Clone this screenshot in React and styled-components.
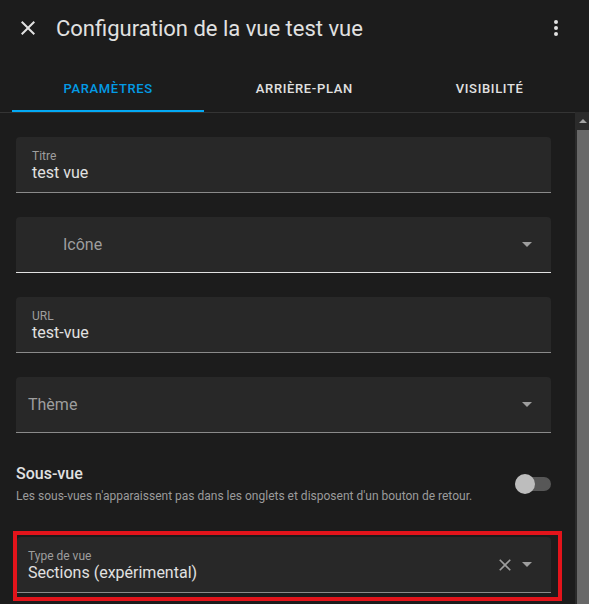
import React from "react";
import styled, { createGlobalStyle } from "styled-components";

const GlobalStyle = createGlobalStyle`
  html, body {
    margin: 0;
    padding: 0;
    background: #1c1c1c;
    overflow: hidden;
  }
  body {
    font-family: Roboto, "Noto Sans", "Liberation Sans", sans-serif;
    color: #e1e1e1;
  }
`;

// Dialog shell
const Dialog = styled.div`
  width: 589px;
  height: 604px;
  display: flex;
  flex-direction: column;
  background: #1c1c1c;
`;

const Header = styled.div`
  height: 56px;
  display: flex;
  align-items: center;
  padding: 0 21px 0 16px;
  gap: 16px;
`;

const Title = styled.h1`
  flex: 1;
  margin: 0;
  font-size: 22px;
  font-weight: 400;
  color: #e1e1e1;
  white-space: nowrap;
`;

const IconButton = styled.div`
  width: 24px;
  height: 24px;
  display: flex;
  align-items: center;
  justify-content: center;
  color: #e1e1e1;
`;

// Tabs
const TabBar = styled.div`
  margin-top: 8px;
  height: 48px;
  display: flex;
  padding: 0 14px 0 12px;
`;

const Tab = styled.div`
  flex: 1 1 auto;
  position: relative;
  display: flex;
  align-items: center;
  justify-content: center;
  font-size: 13px;
  font-weight: 500;
  letter-spacing: 0.65px;
  text-transform: uppercase;
  color: ${(p) => (p.$active ? "#039be5" : "#e1e1e1")};

  &::after {
    content: "";
    display: ${(p) => (p.$active ? "block" : "none")};
    position: absolute;
    left: 0;
    right: 0;
    bottom: 0;
    height: 2px;
    background: #03a9f4;
  }
`;

// Body with content and scrollbar
const Body = styled.div`
  flex: 1;
  min-height: 0;
  display: flex;
`;

const Content = styled.div`
  flex: 1;
  border-top: 1px solid #343434;
  padding: 24px 24px 0 16px;
  display: flex;
  flex-direction: column;
  gap: 24px;
  overflow: hidden;
`;

const Scrollbar = styled.div`
  width: 14px;
  display: flex;
  flex-direction: column;
  background: #2b2b2b;
`;

const ScrollArrow = styled.div`
  height: 18px;
  display: flex;
  align-items: center;
  justify-content: center;
  padding-left: 2px;
`;

const ScrollThumb = styled.div`
  flex: 1;
  margin-left: 2px;
  background: #686868;
`;

// Form fields
const Field = styled.div`
  box-sizing: border-box;
  height: 56px;
  flex-shrink: 0;
  display: flex;
  align-items: center;
  padding: 0 19px 0 ${(p) => p.$pad}px;
  background: #282828;
  border-radius: 4px 4px 0 0;
  border-bottom: 1px solid ${(p) => (p.$focused ? "#e1e1e1" : "#8a8a8a")};
`;

const FieldText = styled.div`
  flex: 1;
  display: flex;
  flex-direction: column;
`;

const FieldLabel = styled.span`
  font-size: 12px;
  line-height: 16px;
  color: #9e9e9e;
`;

const FieldValue = styled.span`
  font-size: 16px;
  line-height: 18px;
  color: #e1e1e1;
`;

const Placeholder = styled.span`
  font-size: 16px;
  color: #9e9e9e;
`;

const Trailing = styled.div`
  display: flex;
  align-items: center;
  gap: 7px;
  color: #9e9e9e;
`;

// Settings row with switch
const SettingsRow = styled.div`
  display: flex;
  align-items: center;
  margin: 5px 0 1px;
`;

const RowText = styled.div`
  flex: 1;
  display: flex;
  flex-direction: column;
`;

const RowTitle = styled.span`
  font-size: 16px;
  font-weight: 500;
  line-height: 24px;
  color: #e1e1e1;
`;

const RowDesc = styled.span`
  font-size: 12px;
  line-height: 20px;
  color: #9b9b9b;
  white-space: nowrap;
`;

const Switch = styled.div`
  position: relative;
  width: 36px;
  height: 14px;
  border-radius: 7px;
  background: #575757;
  margin-left: 12px;

  &::before {
    content: "";
    position: absolute;
    left: 0;
    top: -3px;
    width: 20px;
    height: 20px;
    border-radius: 50%;
    background: #bdbdbd;
  }
`;

const Highlight = styled.div`
  margin-left: -3px;
  width: 549px;
  box-sizing: border-box;
  border: 4px solid #e3141b;
  padding: 2px 7px 4px 0;
  flex-shrink: 0;
`;

const closePath =
  "M19,6.41L17.59,5L12,10.59L6.41,5L5,6.41L10.59,12L5,17.59L6.41,19L12,13.41L17.59,19L19,17.59L13.41,12L19,6.41Z";

const CloseIcon = ({ size = 24 }) => (
  <svg width={size} height={size} viewBox="0 0 24 24" fill="currentColor">
    <path d={closePath} />
  </svg>
);

const DotsIcon = () => (
  <svg width="24" height="24" viewBox="0 0 24 24" fill="currentColor">
    <path d="M12,16A2,2 0 0,1 14,18A2,2 0 0,1 12,20A2,2 0 0,1 10,18A2,2 0 0,1 12,16M12,10A2,2 0 0,1 14,12A2,2 0 0,1 12,14A2,2 0 0,1 10,12A2,2 0 0,1 12,10M12,4A2,2 0 0,1 14,6A2,2 0 0,1 12,8A2,2 0 0,1 10,6A2,2 0 0,1 12,4Z" />
  </svg>
);

const DropArrow = () => (
  <svg width="10" height="5" viewBox="0 0 10 5" fill="#9e9e9e">
    <polygon points="0,0 10,0 5,5" />
  </svg>
);

const tabs = ["Paramètres", "Arrière-plan", "Visibilité"];

const App = () => {
  return (
    <>
      <GlobalStyle />
      <Dialog>
        <Header>
          <IconButton>
            <CloseIcon />
          </IconButton>
          <Title>Configuration de la vue test vue</Title>
          <IconButton>
            <DotsIcon />
          </IconButton>
        </Header>

        <TabBar>
          {tabs.map((t, i) => (
            <Tab key={t} $active={i === 0}>
              {t}
            </Tab>
          ))}
        </TabBar>

        <Body>
          <Content>
            <Field $pad={16}>
              <FieldText>
                <FieldLabel>Titre</FieldLabel>
                <FieldValue>test vue</FieldValue>
              </FieldText>
            </Field>

            <Field $pad={47} $focused>
              <FieldText>
                <Placeholder>Icône</Placeholder>
              </FieldText>
              <Trailing>
                <DropArrow />
              </Trailing>
            </Field>

            <Field $pad={16}>
              <FieldText>
                <FieldLabel>URL</FieldLabel>
                <FieldValue>test-vue</FieldValue>
              </FieldText>
            </Field>

            <Field $pad={12}>
              <FieldText>
                <Placeholder>Thème</Placeholder>
              </FieldText>
              <Trailing>
                <DropArrow />
              </Trailing>
            </Field>

            <SettingsRow>
              <RowText>
                <RowTitle>Sous-vue</RowTitle>
                <RowDesc>
                  Les sous-vues n'apparaissent pas dans les onglets et disposent
                  d'un bouton de retour.
                </RowDesc>
              </RowText>
              <Switch />
            </SettingsRow>

            <Highlight>
              <Field $pad={11}>
                <FieldText>
                  <FieldLabel>Type de vue</FieldLabel>
                  <FieldValue>Sections (expérimental)</FieldValue>
                </FieldText>
                <Trailing>
                  <CloseIcon size={20} />
                  <DropArrow />
                </Trailing>
              </Field>
            </Highlight>
          </Content>

          <Scrollbar>
            <ScrollArrow>
              <svg width="8" height="4" viewBox="0 0 8 4" fill="#a3a3a3">
                <polygon points="0,4 8,4 4,0" />
              </svg>
            </ScrollArrow>
            <ScrollThumb />
          </Scrollbar>
        </Body>
      </Dialog>
    </>
  );
};

export default App;
